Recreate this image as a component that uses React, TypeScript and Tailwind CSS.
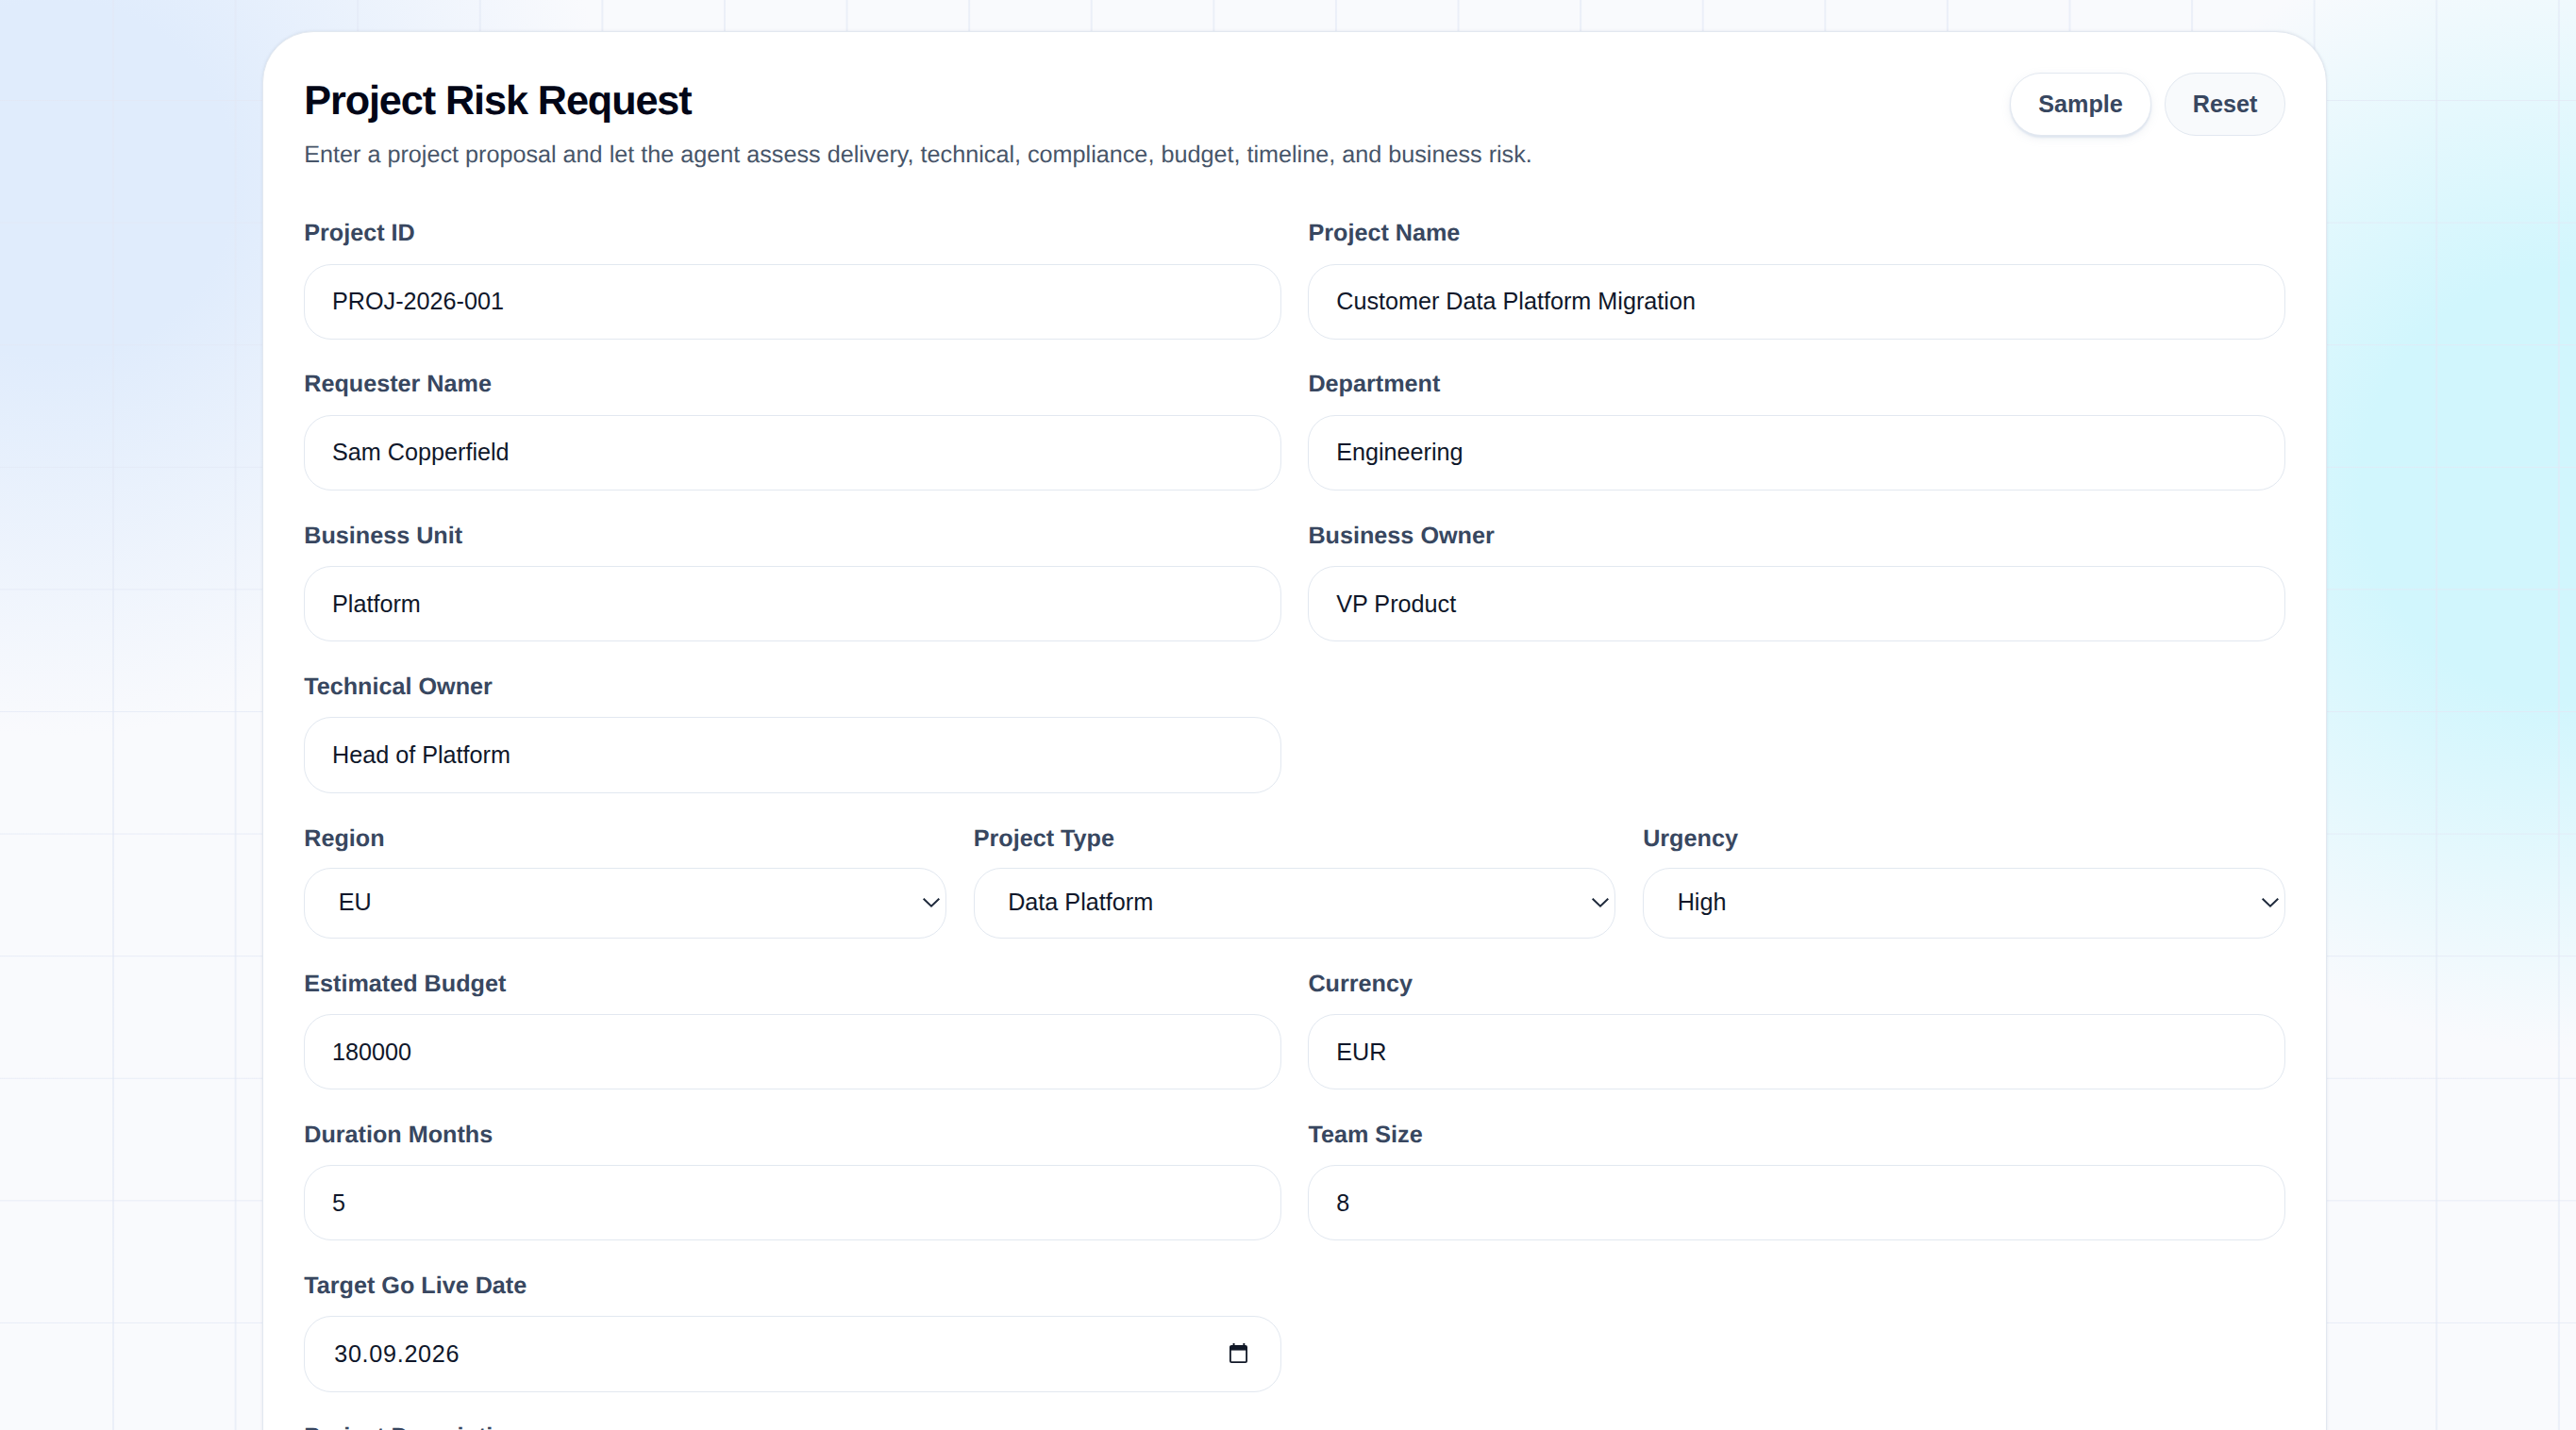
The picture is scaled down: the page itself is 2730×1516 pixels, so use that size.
import React from "react";

const inputCls =
  "block w-full h-[80.2px] rounded-[29px] border border-[#e2e8f0] bg-white pr-[29px] text-[25.2px] text-[#0f172a] outline-none font-['Liberation_Sans',Arial,sans-serif]";
const labelCls = "block h-[30px] leading-[30px] text-[25.2px] font-bold text-[#384760]";

function Field({ label, value }: { label: string; value: string }) {
  return (
    <div className="min-w-0">
      <label className={labelCls + " mb-[17.6px]"}>{label}</label>
      <input className={inputCls + " pl-[28.8px]"} readOnly value={value} />
    </div>
  );
}

function SelectField({ label, value }: { label: string; value: string }) {
  return (
    <div className="min-w-0">
      <label className={labelCls + " mb-[16.4px]"}>{label}</label>
      <div className="relative">
        <select
          className="block w-full h-[74.6px] appearance-none rounded-[29px] border border-[#e2e8f0] bg-white pl-[35.5px] pr-[40px] text-[25.2px] text-[#0f172a] outline-none"
          defaultValue={value}
        >
          <option>{value}</option>
        </select>
        <svg
          className="absolute right-[7px] top-[32px] w-[18px] h-[10px] pointer-events-none"
          viewBox="0 0 18 10"
          fill="none"
        >
          <path d="M0.7 0.7 L9 8.6 L17.3 0.7" stroke="#1e293b" strokeWidth="2" />
        </svg>
      </div>
    </div>
  );
}

function DateField({ label, value }: { label: string; value: string }) {
  return (
    <div className="min-w-0">
      <label className={labelCls + " mb-[17.6px]"}>{label}</label>
      <div className="relative">
        <input className={inputCls + " pl-[31px] tracking-[0.7px]"} readOnly value={value} />
        <svg
          className="absolute right-[36px] top-[28.5px] w-[19px] h-[21px] pointer-events-none"
          viewBox="0 0 19 21"
          fill="none"
        >
          <rect x="0.9" y="2.9" width="17.2" height="17.2" rx="1.2" stroke="#111827" strokeWidth="1.8" />
          <rect x="1" y="3" width="17" height="4.6" fill="#111827" />
          <rect x="3.6" y="0" width="1.9" height="4" fill="#111827" />
          <rect x="14.4" y="0" width="1.9" height="4" fill="#111827" />
        </svg>
      </div>
    </div>
  );
}

export default function App() {
  return (
    <div className="h-[1516px] overflow-hidden bg-[linear-gradient(rgba(226,232,245,0.75)_1px,transparent_1px),linear-gradient(90deg,rgba(226,232,245,0.6)_2px,transparent_2px),radial-gradient(circle_590px_at_60px_190px,#e0ecfc_32%,transparent_100%),radial-gradient(circle_600px_at_2730px_515px,#d1f6fd_38%,transparent_100%),linear-gradient(#f9fafd,#f9fafd)] bg-[size:129.6px_129.6px,129.6px_129.6px,100%_100%,100%_100%,100%_100%] bg-[position:0_106px,119px_0,0_0,0_0,0_0] pt-[33px] pl-[278px] pr-[264px] font-['Liberation_Sans',Arial,sans-serif] [text-rendering:geometricPrecision]">
      <main className="rounded-[54px] border border-[#e2e8f0] bg-white pt-[44px] px-[43.2px] pb-[44px] shadow-[0_0_3px_rgba(148,163,184,0.25)]">
        <header className="flex items-start justify-between h-[154px]">
          <div>
            <h1 className="mt-[2px] text-[43.2px] leading-[54px] font-bold tracking-[-1.08px] text-[#020617]">
              Project Risk Request
            </h1>
            <p className="mt-[12px] text-[25.2px] leading-[36px] text-[#475569]">
              Enter a project proposal and let the agent assess delivery, technical, compliance, budget, timeline, and business risk.
            </p>
          </div>
          <div className="flex gap-[14.5px] -mt-px">
            <button className="h-[67px] w-[149.6px] rounded-[33px] border border-[#e2e8f0] bg-white text-[25.2px] font-bold text-[#384760] shadow-[0_2px_2px_#dfe6f0,0_3px_10px_rgba(148,163,184,0.15)]">
              Sample
            </button>
            <button className="h-[67px] w-[127.5px] rounded-[33px] border border-[#e2e8f0] bg-[#f8fafc] text-[25.2px] font-bold text-[#384760]">
              Reset
            </button>
          </div>
        </header>
        <div className="flex flex-col">
          <div className="grid grid-cols-2 gap-x-[28.8px] gap-y-[32.5px]">
            <Field label="Project ID" value="PROJ-2026-001" />
            <Field label="Project Name" value="Customer Data Platform Migration" />
            <Field label="Requester Name" value="Sam Copperfield" />
            <Field label="Department" value="Engineering" />
            <Field label="Business Unit" value="Platform" />
            <Field label="Business Owner" value="VP Product" />
            <Field label="Technical Owner" value="Head of Platform" />
          </div>
          <div className="mt-[32.9px] grid grid-cols-3 gap-x-[28.8px]">
            <SelectField label="Region" value="EU" />
            <SelectField label="Project Type" value="Data Platform" />
            <SelectField label="Urgency" value="High" />
          </div>
          <div className="mt-[33px] grid grid-cols-2 gap-x-[28.8px] gap-y-[32.4px]">
            <Field label="Estimated Budget" value="180000" />
            <Field label="Currency" value="EUR" />
            <Field label="Duration Months" value="5" />
            <Field label="Team Size" value="8" />
            <DateField label="Target Go Live Date" value="30.09.2026" />
          </div>
          <div className="mt-[32.4px]">
            <label className={labelCls + " mb-[17.6px]"}>Project Description</label>
            <textarea className="block w-full h-[200px] rounded-[29px] border border-[#e2e8f0] bg-white" readOnly />
          </div>
        </div>
      </main>
    </div>
  );
}
